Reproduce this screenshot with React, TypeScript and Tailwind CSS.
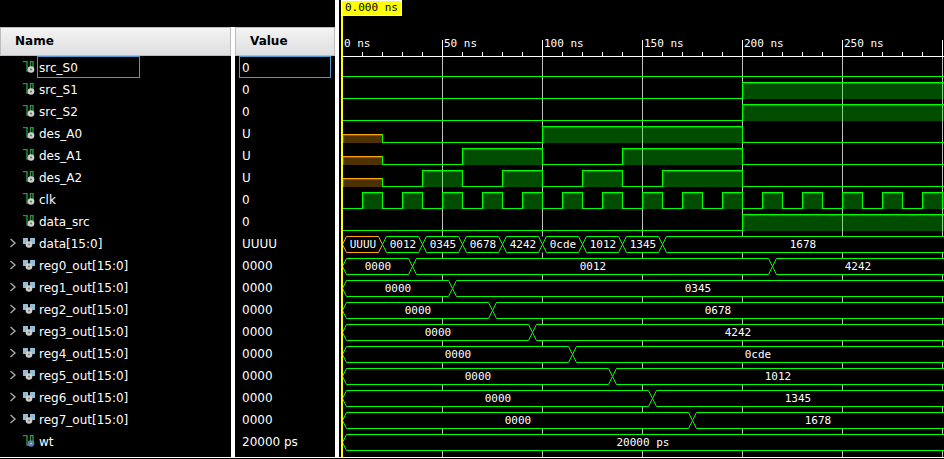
import { useLayoutEffect, useRef, useState } from "react";

type Kind = "bit" | "bus" | "const";

interface Signal {
  name: string;
  value: string;
  kind: Kind;
  // Each entry is [start time in ns, level or bus value].
  changes: [number, string][];
}

const clock: [number, string][] = Array.from({ length: 60 }, (_, i) => [i * 10, i % 2 ? "1" : "0"]);

const signals: Signal[] = [
  { name: "src_S0", value: "0", kind: "bit", changes: [[0, "0"]] },
  { name: "src_S1", value: "0", kind: "bit", changes: [[0, "0"], [200, "1"]] },
  { name: "src_S2", value: "0", kind: "bit", changes: [[0, "0"], [200, "1"]] },
  { name: "des_A0", value: "U", kind: "bit", changes: [[0, "U"], [20, "0"], [100, "1"], [200, "0"]] },
  { name: "des_A1", value: "U", kind: "bit", changes: [[0, "U"], [20, "0"], [60, "1"], [100, "0"], [140, "1"], [200, "0"]] },
  {
    name: "des_A2",
    value: "U",
    kind: "bit",
    changes: [[0, "U"], [20, "0"], [40, "1"], [60, "0"], [80, "1"], [100, "0"], [120, "1"], [140, "0"], [160, "1"], [200, "0"]],
  },
  { name: "clk", value: "0", kind: "bit", changes: clock },
  { name: "data_src", value: "0", kind: "bit", changes: [[0, "0"], [200, "1"]] },
  {
    name: "data[15:0]",
    value: "UUUU",
    kind: "bus",
    changes: [[0, "UUUU"], [20, "0012"], [40, "0345"], [60, "0678"], [80, "4242"], [100, "0cde"], [120, "1012"], [140, "1345"], [160, "1678"]],
  },
  { name: "reg0_out[15:0]", value: "0000", kind: "bus", changes: [[0, "0000"], [35, "0012"], [215, "4242"]] },
  { name: "reg1_out[15:0]", value: "0000", kind: "bus", changes: [[0, "0000"], [55, "0345"]] },
  { name: "reg2_out[15:0]", value: "0000", kind: "bus", changes: [[0, "0000"], [75, "0678"]] },
  { name: "reg3_out[15:0]", value: "0000", kind: "bus", changes: [[0, "0000"], [95, "4242"]] },
  { name: "reg4_out[15:0]", value: "0000", kind: "bus", changes: [[0, "0000"], [115, "0cde"]] },
  { name: "reg5_out[15:0]", value: "0000", kind: "bus", changes: [[0, "0000"], [135, "1012"]] },
  { name: "reg6_out[15:0]", value: "0000", kind: "bus", changes: [[0, "0000"], [155, "1345"]] },
  { name: "reg7_out[15:0]", value: "0000", kind: "bus", changes: [[0, "0000"], [175, "1678"]] },
  { name: "wt", value: "20000 ps", kind: "const", changes: [[0, "20000 ps"]] },
];

const ROW = 22;
const TOP = 56;
const HEIGHT = 457;
const x = (t: number) => 3.5 + t * 2;

function SignalIcon({ kind }: { kind: Kind }) {
  const isConst = kind === "const";
  return (
    <svg viewBox="0 0 12 12" className="h-3 w-3 shrink-0" aria-hidden="true">
      {kind === "bus" ? (
        <>
          <path d="M0 1h5v4l-2 2H0zM7 1h5v6H9L7 5z" fill="#93bdd6" />
          <circle cx="6" cy="7.5" r="3.3" fill="#d0d0d0" />
          <circle cx="6" cy="7.5" r="1.1" fill="#808080" />
        </>
      ) : (
        <>
          <path d="M0 .5h4M4 0v10.5M3.5 10H6M7.5 7V.5h2.5V7" fill="none" stroke="#2a9440" strokeWidth="1.4" />
          <circle cx="8" cy="8.5" r="3.3" fill={isConst ? "#5f7ba6" : "#d0d0d0"} />
          <circle cx="8" cy="8.5" r="1.1" fill={isConst ? "#a9bad4" : "#707070"} />
        </>
      )}
    </svg>
  );
}

function BitTrace({ signal, row, width }: { signal: Signal; row: number; width: number }) {
  const low = TOP + row * ROW + 20.5;
  const level = (v: string) => (v === "1" ? low - 16 : v === "U" ? low - 8 : low);
  return (
    <g>
      {signal.changes.map(([t, v], i) => {
        const next = signal.changes[i + 1];
        const x0 = x(t);
        const x1 = next ? x(next[0]) : width + 4;
        if (x0 > width) return null;
        const y = level(v);
        const color = v === "U" ? "#ffa500" : "#00ff00";
        return (
          <g key={t}>
            {v !== "0" && (
              <>
                <rect x={x0} y={y} width={x1 - x0} height={low - y + 0.5} fill={color} fillOpacity="0.3" />
                <path d={`M${x0 + 1} ${low}V${y + 1}H${x1}`} fill="none" stroke={color} strokeOpacity="0.3" />
              </>
            )}
            <path d={`M${x0} ${y}H${x1}`} stroke={color} strokeLinecap="square" />
            {next && <path d={`M${x1} ${y}V${level(next[1])}`} stroke="#00ff00" strokeLinecap="square" />}
          </g>
        );
      })}
    </g>
  );
}

function BusTrace({ signal, row, width }: { signal: Signal; row: number; width: number }) {
  const top = TOP + row * ROW + 4.5;
  const bottom = top + 16;
  const mid = top + 8;
  return (
    <g>
      <rect x={x(0)} y={top} width={width} height={16} fill="#000" />
      {signal.changes.map(([t, v], i) => {
        const next = signal.changes[i + 1];
        const x0 = x(t);
        const x1 = next ? x(next[0]) : width;
        const color = v === "UUUU" ? "#ffa500" : "#00ff00";
        const close = next ? `L${x1 - 4} ${top}L${x1} ${mid}L${x1 - 4} ${bottom}` : `L${x1} ${top}M${x1} ${bottom}`;
        return (
          <g key={t}>
            <path d={`M${x0} ${mid}L${x0 + 4} ${top}${close}L${x0 + 4} ${bottom}L${x0} ${mid}`} fill="none" stroke={color} />
            <text x={Math.round((x0 + x1) / 2)} y={top + 11.5} textAnchor="middle" fill="#fff">
              {v}
            </text>
          </g>
        );
      })}
    </g>
  );
}

function Waveform() {
  const ref = useRef<HTMLDivElement>(null);
  const [width, setWidth] = useState(605);

  useLayoutEffect(() => {
    const el = ref.current;
    if (!el) return;
    const measure = () => setWidth(el.clientWidth);
    measure();
    const observer = new ResizeObserver(measure);
    observer.observe(el);
    return () => observer.disconnect();
  }, []);

  const ticks = Array.from({ length: Math.floor((width - 3) / 20) + 1 }, (_, i) => i * 10);

  return (
    <div ref={ref} className="relative min-w-0 flex-1 overflow-hidden border-b border-white">
      <svg width={width} height={HEIGHT} className="block font-['DejaVu_Sans_Mono',monospace] text-[11px]" role="img" aria-label="Waveforms">
        {ticks.map((t) => {
          const major = t % 50 === 0;
          return (
            <g key={t}>
              {major && <path d={`M${x(t)} ${TOP}V${HEIGHT}`} stroke="#c0c0c0" />}
              <path d={`M${x(t)} ${major ? 40 : 52}V${TOP}`} stroke="#fff" />
              {major && x(t) + 48 < width && (
                <text x={x(t) + 1.5} y="47" fill="#fff">
                  {t} ns
                </text>
              )}
            </g>
          );
        })}
        <path d={`M3 ${TOP + 0.5}H${width}`} stroke="#fff" />
        {signals.map((s, i) =>
          s.kind === "bit" ? (
            <BitTrace key={s.name} signal={s} row={i} width={width} />
          ) : (
            <BusTrace key={s.name} signal={s} row={i} width={width} />
          ),
        )}
        <rect x="2" y="0" width="2" height={HEIGHT} fill="#ff0" />
      </svg>
      <div className="absolute top-0 left-[2px] h-4 border border-white bg-[#ffff00] px-[3px] font-['DejaVu_Sans_Mono',monospace] text-[11px] leading-[14px] text-black">
        0.000 ns
      </div>
    </div>
  );
}

const header =
  "h-[29px] border border-[#bcbcbc] bg-linear-to-b from-[#f3f3f3] to-[#dfdfe1] text-[12px] leading-[27px] font-bold text-black";

export default function App() {
  return (
    <div className="bg-black pb-px">
      <main className="flex w-full overflow-hidden bg-black font-['DejaVu_Sans',sans-serif] text-[12px] text-white">
        <section className="w-[231px] shrink-0 border-b border-white pt-[27px]">
          <h2 className={`${header} pl-[14px]`}>Name</h2>
          <ul>
            {signals.map((s, i) => (
              <li key={s.name} className="flex h-[22px] items-center pl-2">
                {s.kind === "bus" ? (
                  <button type="button" aria-label={`Expand ${s.name}`} className="flex w-[15px] shrink-0">
                    <svg viewBox="0 0 10 10" className="h-[10px] w-[10px]" fill="none" stroke="#a8a8a8" strokeWidth="1.4">
                      <path d="M2.5 1L7 5L2.5 9" />
                    </svg>
                  </button>
                ) : (
                  <span className="w-[15px] shrink-0" />
                )}
                <SignalIcon kind={s.kind} />
                <span
                  className={`ml-[2px] h-[22px] border px-px leading-[22px] whitespace-nowrap ${
                    i === 0 ? "w-[103px] border-[#4a9ad4]" : "border-transparent"
                  }`}
                >
                  {s.name}
                </span>
              </li>
            ))}
          </ul>
        </section>
        <div className="mt-[27px] w-1 shrink-0 bg-white" />
        <section className="w-[100px] shrink-0 border-b border-white pt-[27px]">
          <h2 className={`${header} pl-[14px]`}>Value</h2>
          <ul className="px-1">
            {signals.map((s, i) => (
              <li
                key={s.name}
                className={`h-[22px] border px-[2px] leading-[22px] whitespace-nowrap ${i === 0 ? "border-[#4a9ad4]" : "border-transparent"}`}
              >
                {s.value}
              </li>
            ))}
          </ul>
        </section>
        <div className="w-1 shrink-0 bg-white" />
        <Waveform />
      </main>
    </div>
  );
}
